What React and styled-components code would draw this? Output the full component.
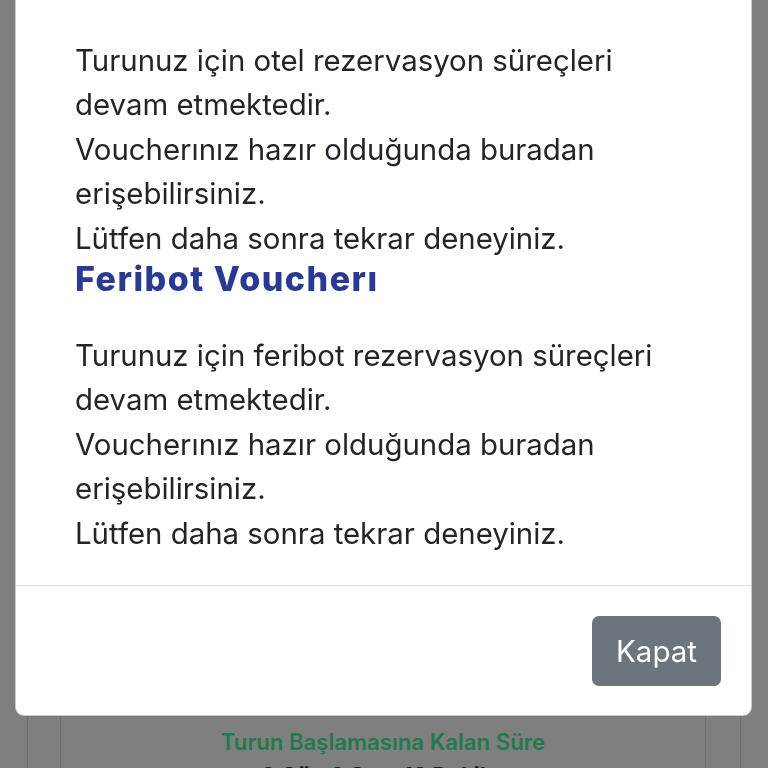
import React from "react";
import styled, { createGlobalStyle } from "styled-components";

const Global = createGlobalStyle`
  html, body { margin: 0; padding: 0; background: #ffffff; }
  body { font-family: Inter, "Noto Sans", sans-serif; color: #212529; }
  * { box-sizing: border-box; }
`;

const Page = styled.div`
  padding: 0 27px;
  height: 768px;
  overflow: hidden;
`;

const OuterCard = styled.div`
  border-left: 1px solid #e2e2e2;
  border-right: 1px solid #e2e2e2;
  padding: 0 34px 0 32px;
  height: 100%;
`;

const InnerCard = styled.div`
  border-left: 1px solid #e2e2e2;
  border-right: 1px solid #e2e2e2;
  height: 100%;
  display: flex;
  flex-direction: column;
  align-items: center;
`;

const HiddenDetails = styled.div`
  height: 727px;
  flex-shrink: 0;
`;

const CountdownTitle = styled.div`
  font-size: 22.2px;
  font-weight: 600;
  color: #3ef49a;
  line-height: 30px;
`;

const CountdownValue = styled.div`
  margin-top: 3px;
  font-size: 22px;
  font-weight: 700;
  color: #333333;
  line-height: 30px;
`;

const Backdrop = styled.div`
  position: fixed;
  inset: 0;
  background: rgba(0, 0, 0, 0.5);
  display: flex;
  align-items: flex-end;
  justify-content: center;
  padding: 0 16px 52px 15px;
  overflow: hidden;
`;

const Dialog = styled.div`
  width: 100%;
  background: #ffffff;
  border: 1px solid rgba(0, 0, 0, 0.2);
  border-radius: 9px;
  display: flex;
  flex-direction: column;
  flex-shrink: 0;
`;

const Body = styled.div`
  padding: 30px 56px 29px 59px;
`;

const Heading = styled.h5`
  margin: 0 0 36.5px;
  font-family: Inter, "Noto Sans", sans-serif;
  font-size: 34px;
  line-height: 36px;
  font-weight: 800;
  letter-spacing: 1.5px;
  color: ${(p) => (p.$faded ? "#dfe3f1" : "#2a3a93")};
`;

const Text = styled.p`
  margin: 0;
  font-size: 29.4px;
  line-height: 44.5px;
  color: #212529;
`;

const Footer = styled.div`
  border-top: 1px solid #dee2e6;
  height: 130px;
  padding: 0 30px 0 0;
  display: flex;
  align-items: center;
  justify-content: flex-end;
`;

const Button = styled.button`
  height: 70px;
  padding: 0 24px;
  margin-top: 1px;
  border: none;
  border-radius: 7px;
  background: #6c757d;
  color: #ffffff;
  font-family: Inter, "Noto Sans", sans-serif;
  font-size: 29.5px;
  font-weight: 400;
`;

const vouchers = [
  { title: "Otel Voucherı", kind: "otel", faded: true },
  { title: "Feribot Voucherı", kind: "feribot" },
];

export default function App() {
  return (
    <>
      <Global />
      <Page>
        <OuterCard>
          <InnerCard>
            <HiddenDetails />
            <CountdownTitle>Turun Başlamasına Kalan Süre</CountdownTitle>
            <CountdownValue>0 Gün 0 Saat 18 Dakika</CountdownValue>
          </InnerCard>
        </OuterCard>
      </Page>
      <Backdrop>
        <Dialog>
          <Body>
            {vouchers.map((v) => (
              <React.Fragment key={v.kind}>
                <Heading $faded={v.faded}>{v.title}</Heading>
                <Text>
                  Turunuz için {v.kind} rezervasyon süreçleri devam etmektedir.
                  <br />
                  Voucherınız hazır olduğunda buradan erişebilirsiniz.
                  <br />
                  Lütfen daha sonra tekrar deneyiniz.
                </Text>
              </React.Fragment>
            ))}
          </Body>
          <Footer>
            <Button>Kapat</Button>
          </Footer>
        </Dialog>
      </Backdrop>
    </>
  );
}
